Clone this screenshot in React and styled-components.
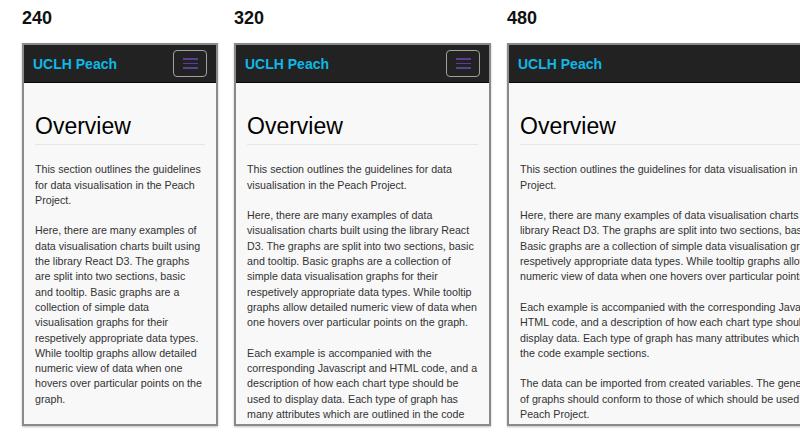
import styled, { createGlobalStyle } from 'styled-components';

const SIZES = [
  { label: '240', width: 196 },
  { label: '320', width: 257 },
  { label: '480', width: 382 },
];

const PARAS = [
  'This section outlines the guidelines for data visualisation in the Peach Project.',
  'Here, there are many examples of data visualisation charts built using the library React D3. The graphs are split into two sections, basic and tooltip. Basic graphs are a collection of simple data visualisation graphs for their respetively appropriate data types. While tooltip graphs allow detailed numeric view of data when one hovers over particular points on the graph.',
  'Each example is accompanied with the corresponding Javascript and HTML code, and a description of how each chart type should be used to display data. Each type of graph has many attributes which are outlined in the code example sections.',
  'The data can be imported from created variables. The general aesthetics of graphs should conform to those of which should be used across the Peach Project.',
];

const Global = createGlobalStyle`
  html, body {
    margin: 0;
    background: #fff;
    font-family: 'Liberation Sans', Arial, sans-serif;
  }
`;

export default function App() {
  return (
    <>
      <Global />
      <Page>
        {SIZES.map((s) => (
          <Column key={s.label}>
            <Label>{s.label}</Label>
            <Device $width={s.width}>
              <Navbar>
                <Brand>UCLH Peach</Brand>
                <Toggle aria-label="menu">
                  <Bar />
                  <Bar />
                  <Bar />
                </Toggle>
              </Navbar>
              <Content>
                <Title>Overview</Title>
                {PARAS.map((p, i) => (
                  <Para key={i}>{p}</Para>
                ))}
              </Content>
            </Device>
          </Column>
        ))}
      </Page>
    </>
  );
}

const Page = styled.div`
  display: flex;
  gap: 16px;
  padding-left: 22px;
  width: 800px;
  height: 434px;
  overflow: hidden;
  box-sizing: border-box;
`;

const Column = styled.div`
  display: flex;
  flex-direction: column;
  flex-shrink: 0;
`;

const Label = styled.div`
  font-size: 18px;
  font-weight: 700;
  line-height: 20px;
  color: #111;
  margin-top: 8px;
  height: 35px;
`;

const Device = styled.div`
  width: ${({ $width }) => $width}px;
  height: 383px;
  box-sizing: border-box;
  border: 2px solid #8a8a8a;
  background: #f8f8f8;
  overflow: hidden;
  box-shadow: 0 1px 2px rgba(0, 0, 0, 0.25);
`;

const Navbar = styled.div`
  height: 37px;
  background: #222;
  border-bottom: 1px solid #080808;
  display: flex;
  align-items: center;
  justify-content: space-between;
  padding: 0 9px 0 9px;
`;

const Brand = styled.span`
  color: #0fb8e6;
  font-size: 14px;
  font-weight: 700;
  white-space: nowrap;
`;

const Toggle = styled.div`
  width: 34px;
  height: 27px;
  box-sizing: border-box;
  border: 1.5px solid #a0a0a0;
  border-radius: 4px;
  display: flex;
  flex-direction: column;
  align-items: center;
  justify-content: center;
  gap: 2.6px;
  flex-shrink: 0;
`;

const Bar = styled.span`
  width: 15px;
  height: 1.8px;
  background: #5b3f93;
`;

const Content = styled.div`
  padding: 0 11px;
`;

const Title = styled.h1`
  margin: 31px 0 0;
  padding-bottom: 5px;
  border-bottom: 1px solid #e6e6e6;
  font-size: 23px;
  line-height: 1.1;
  font-weight: 400;
  color: #000;
`;

const Para = styled.p`
  margin: 0 0 15.3px;
  font-size: 10.7px;
  line-height: 15.3px;
  color: #333;
  &:first-of-type {
    margin-top: 17px;
  }
`;
